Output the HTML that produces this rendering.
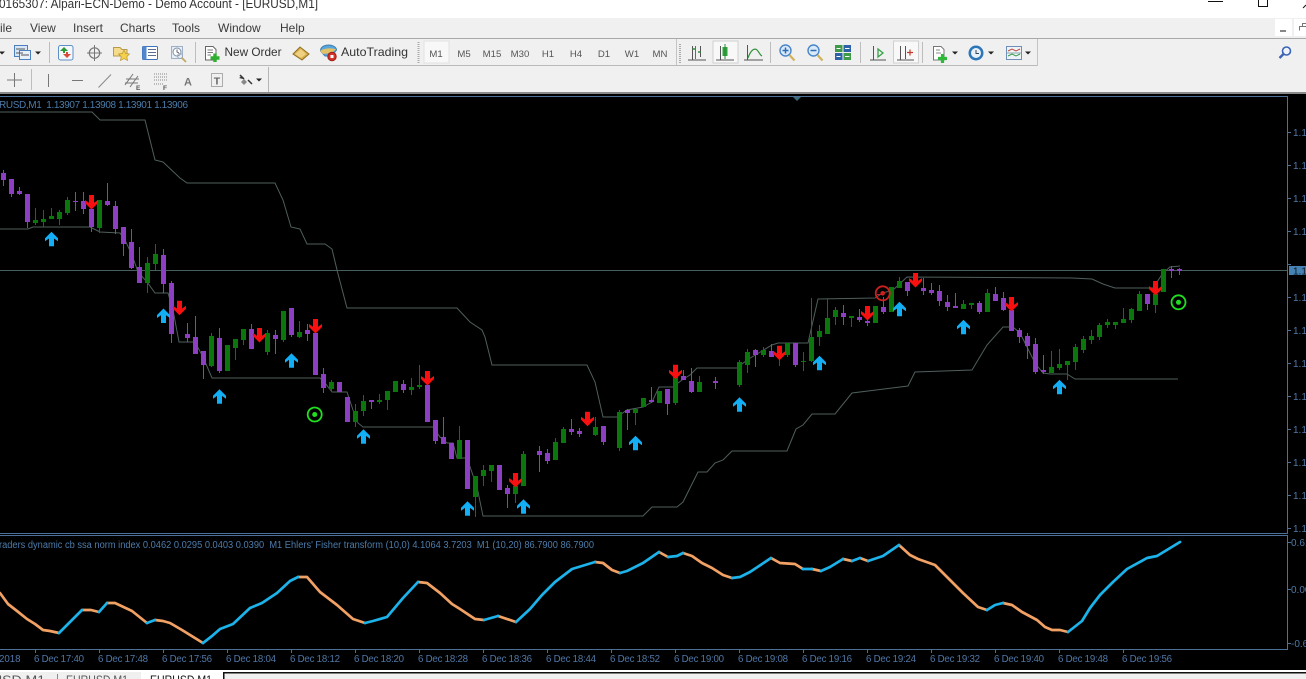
<!DOCTYPE html>
<html><head><meta charset="utf-8"><title>MetaTrader</title>
<style>
html,body{margin:0;padding:0;background:#000;width:1306px;height:679px;overflow:hidden}
svg{position:absolute;left:0;top:0;display:block}
text{font-family:"Liberation Sans",sans-serif}
</style></head><body>
<svg width="1306" height="679" viewBox="0 0 1306 679" xmlns="http://www.w3.org/2000/svg">
<defs>
<polygon id="up" points="0,-7.5 6.5,-1 6.5,2 2.5,-0.8 2.5,7 -2.5,7 -2.5,-0.8 -6.5,2 -6.5,-1" fill="#12aef6"/>
<polygon id="dn" points="0,7.5 6.5,1 6.5,-2 2.5,0.8 2.5,-7 -2.5,-7 -2.5,0.8 -6.5,-2 -6.5,1" fill="#f80f0f"/>
<g id="tri"><polygon points="-3,-1.5 3,-1.5 0,1.5" fill="#222"/></g>
</defs>

<!-- window chrome -->
<rect x="0" y="0" width="1306" height="18" fill="#fff"/>
<rect x="0" y="18" width="1306" height="76" fill="#f0f0f0"/>
<rect x="0" y="38" width="1306" height="1" fill="#a9a9a9"/>
<rect x="0" y="65" width="1038" height="1" fill="#b9b9b9"/>
<rect x="1037" y="39" width="1" height="27" fill="#c4c4c4"/>
<rect x="268" y="67" width="1" height="25" fill="#b5b5b5"/>
<rect x="0" y="92" width="1306" height="2" fill="#8a8a8a"/>
<text x="-1" y="8" font-size="12.5" fill="#333" textLength="319" lengthAdjust="spacingAndGlyphs">0165307: Alpari-ECN-Demo - Demo Account - [EURUSD,M1]</text>
<rect x="1208" y="1" width="15" height="1" fill="#111"/>
<path d="M1258.5 0V6.5H1267.5V0" fill="none" stroke="#111"/>
<path d="M1303 8L1306 5" stroke="#111"/>

<g font-size="12" fill="#3a3a3a">
<text x="0" y="32">ile</text><text x="30" y="32">View</text><text x="73" y="32">Insert</text><text x="120" y="32">Charts</text><text x="172" y="32">Tools</text><text x="218" y="32">Window</text><text x="280" y="32">Help</text>
</g>
<rect x="1275" y="19" width="17" height="17" fill="#fff"/><rect x="1280" y="30" width="6" height="2" fill="#888"/>
<rect x="1294" y="19" width="12" height="17" fill="#fff"/><path d="M1299.5 30.5V26.5H1306M1302.5 26V23.5H1306" fill="none" stroke="#777"/>
<circle cx="1286.5" cy="51" r="4" fill="#eef3fb" stroke="#3b62b5" stroke-width="1.6"/><path d="M1283.5 54L1279.5 58" stroke="#3b62b5" stroke-width="2.4"/>

<!-- toolbar row 1 -->
<use href="#tri" x="2" y="53"/>
<rect x="14.5" y="45.5" width="13" height="11" fill="#d8e6f7" stroke="#4c7fbd"/><rect x="19.5" y="50.5" width="11" height="9" fill="#e8f0fa" stroke="#4c7fbd"/><path d="M16 49H25M16 53H23M21 55H29" stroke="#555"/>
<use href="#tri" x="38" y="53"/>
<rect x="49" y="42" width="1" height="21" fill="#bdbdbd"/>
<rect x="58.5" y="45.5" width="14.5" height="14.5" rx="2" fill="#f4f8fc" stroke="#5c8fc8"/><polygon points="64,47 68,51 65,51 65,53 63,53 63,51 60,51" fill="#2a9a38"/><polygon points="67,58 63,54 66,54 66,52 68,52 68,54 71,54" fill="#d94a3a"/>
<circle cx="94.5" cy="53" r="5.2" fill="none" stroke="#777" stroke-width="1.2"/><path d="M94.5 45V61M87 53H102" stroke="#777"/>
<path d="M113.5 47.5H120L122 49.5H127V56H113.5Z" fill="#f6dc8a" stroke="#b79a4a"/><polygon points="124,50 125.7,53.5 129.5,54 126.8,56.6 127.5,60.5 124,58.6 120.5,60.5 121.2,56.6 118.5,54 122.3,53.5" fill="#f5d04a" stroke="#b8952e" stroke-width=".7"/>
<rect x="142.5" y="46.5" width="15" height="13" rx="1" fill="#fff" stroke="#3f72b8"/><rect x="142.5" y="46.5" width="4" height="13" fill="#4f86cc"/><path d="M148 49.5H156M148 52.5H156M148 55.5H156" stroke="#5b6f8c"/>
<rect x="171.5" y="46.5" width="11" height="12" fill="#e7eef6" stroke="#9db0c6"/><circle cx="177" cy="52" r="4" fill="#fff" stroke="#7d8fa6"/><path d="M177 49.5V52L179 53" stroke="#667" fill="none"/><circle cx="180" cy="56" r="2.5" fill="none" stroke="#9aa9bb"/><path d="M182 58L186 62" stroke="#c0a862" stroke-width="1.8"/>
<rect x="195" y="42" width="1" height="21" fill="#bdbdbd"/>
<path d="M205.5 46.5H213L216 49.5V60H205.5Z" fill="#fff" stroke="#666"/><path d="M207.5 50H213M207.5 52.5H213M207.5 55H211" stroke="#777"/><path d="M215 53.5V62M210.5 58H219.5" stroke="#2fae2f" stroke-width="3.4"/>
<text x="224.5" y="56" font-size="12" fill="#333" textLength="57" lengthAdjust="spacingAndGlyphs">New Order</text>
<polygon points="293,54 300,47 309,54 302,60" fill="#d9ad4a" stroke="#8f7024"/><polygon points="295,54 301,49 306,54 301,58" fill="#f0d184"/>
<path d="M320.5 51C320.5 46 326 45 329 45C332.5 45 336.5 47 336.5 50L332 56H325Z" fill="#5aa6da" stroke="#3e7fb0"/><path d="M320 51C323 48.5 332 47.5 336 49.5L331 53L323 54Z" fill="#e3c266"/><circle cx="332" cy="56.5" r="4.2" fill="#d4332a" stroke="#9d1f18"/><rect x="330.5" y="55" width="3" height="3" fill="#fff"/>
<text x="341" y="56" font-size="12" fill="#333" textLength="67" lengthAdjust="spacingAndGlyphs">AutoTrading</text>
<path d="M418.5 42V63" stroke="#aaa" stroke-dasharray="1 1" stroke-width="2"/>
<rect x="424" y="41" width="25" height="22" fill="#f8f8f8" stroke="#e2e2e2"/>
<g font-size="9.6" fill="#555" text-anchor="middle">
<text x="436" y="57">M1</text><text x="464" y="57">M5</text><text x="492" y="57">M15</text><text x="520" y="57">M30</text><text x="548" y="57">H1</text><text x="576" y="57">H4</text><text x="604" y="57">D1</text><text x="632" y="57">W1</text><text x="660" y="57">MN</text>
</g>
<rect x="676" y="39" width="1" height="26" fill="#c4c4c4"/>
<path d="M680 44V63" stroke="#aaa" stroke-dasharray="1 1" stroke-width="2"/>
<!-- chart type icons -->
<path d="M692.5 46V60M688 60H706M700.5 46V57" stroke="#555" fill="none"/><path d="M692.5 49H695M700.5 52H698" stroke="#2f8f3a" stroke-width="1.5"/><path d="M695.5 46V59" stroke="#2f8f3a"/>
<rect x="713" y="41" width="25" height="22" fill="#f8f8f8" stroke="#cfcfcf"/><path d="M720.5 46V60M716 60H734" stroke="#555"/><rect x="722.5" y="47" width="5" height="9" fill="#2ea43a"/><path d="M725 44V59" stroke="#2a8a35"/>
<path d="M747.5 45V60M744 60H763" stroke="#555"/><path d="M748 58C751 49 755 48 757 50C759 52 760 55 762 56" fill="none" stroke="#2f8f3a" stroke-width="1.2"/>
<rect x="770" y="42" width="1" height="21" fill="#bdbdbd"/>
<circle cx="785.5" cy="50.5" r="5.5" fill="#dbeafb" stroke="#4a86c8" stroke-width="1.4"/><path d="M782.5 50.5H788.5M785.5 47.5V53.5" stroke="#2e6cb0" stroke-width="1.5"/><path d="M789.5 55L794.5 60.5" stroke="#d1b25a" stroke-width="2.2"/>
<circle cx="813.5" cy="50.5" r="5.5" fill="#dbeafb" stroke="#4a86c8" stroke-width="1.4"/><path d="M810.5 50.5H816.5" stroke="#2e6cb0" stroke-width="1.5"/><path d="M817.5 55L822.5 60.5" stroke="#d1b25a" stroke-width="2.2"/>
<rect x="835" y="45" width="7.5" height="7" fill="#3f9a4a"/><rect x="843.5" y="45" width="7.5" height="7" fill="#2d62a8"/><rect x="835" y="53" width="7.5" height="7" fill="#2d62a8"/><rect x="843.5" y="53" width="7.5" height="7" fill="#3f9a4a"/><path d="M836.5 48.5H840.5M845 48.5H849.5M836.5 56.5H840.5M845 56.5H849.5" stroke="#fff"/>
<rect x="860" y="42" width="1" height="21" fill="#bdbdbd"/>
<path d="M873.5 46V60M870 60H886" stroke="#555"/><polygon points="878,49 883,53 878,57" fill="none" stroke="#39a047" stroke-width="1.3"/>
<rect x="893.5" y="41" width="25" height="22" fill="#f8f8f8" stroke="#cfcfcf"/><path d="M900.5 46V60M897 60H914M905.5 46V59" stroke="#555"/><path d="M907 52.5H913M910 49.5V55.5" stroke="#c03a2a" stroke-width="1.2"/>
<rect x="922" y="42" width="1" height="21" fill="#bdbdbd"/>
<path d="M933.5 46.5H941L944 49.5V60H933.5Z" fill="#fff" stroke="#777"/><path d="M936 50H940M936 53H941" stroke="#888"/><path d="M942.5 54V63M938 58.5H947" stroke="#2fb83a" stroke-width="3.2"/>
<use href="#tri" x="955" y="53"/>
<circle cx="976" cy="53" r="7.5" fill="#2c75b8"/><circle cx="976" cy="53" r="5" fill="#e8f0f8"/><path d="M976 50V53.5H979" stroke="#345" fill="none"/>
<use href="#tri" x="991" y="53"/>
<rect x="1006.5" y="46.5" width="15" height="13" fill="#eef3f9" stroke="#6d8fb8"/><path d="M1008 51L1012 49L1016 51L1020 49" stroke="#c24a3a" fill="none"/><path d="M1008 56L1012 54L1016 56L1020 54" stroke="#3a9a4a" fill="none"/><path d="M1006.5 53H1021" stroke="#8aa"/>
<use href="#tri" x="1028" y="53"/>

<!-- toolbar row 2 -->
<path d="M7 80H22M14.5 73V87" stroke="#777"/>
<rect x="31" y="69" width="1" height="21" fill="#bdbdbd"/>
<path d="M48.5 74V87" stroke="#777"/>
<path d="M72 80.5H83" stroke="#777"/>
<path d="M98.5 87.5L111 74.5" stroke="#888"/>
<path d="M125 85L133 74M130 87L138 76M126 79H139M125 83H138" stroke="#777" fill="none"/>
<text x="136" y="90" font-size="6.5" font-weight="bold" fill="#555">E</text>
<path d="M154 74H168M154 77H168M154 80H168M154 84H164" stroke="#888" stroke-dasharray="1 1"/>
<text x="163" y="90" font-size="6.5" font-weight="bold" fill="#555">F</text>
<text x="188" y="85.5" font-size="11" font-weight="bold" fill="#777" text-anchor="middle">A</text>
<rect x="211.5" y="73.5" width="11" height="13" fill="none" stroke="#666" stroke-dasharray="1 1"/>
<text x="217" y="84.5" font-size="10.5" font-weight="bold" fill="#666" text-anchor="middle">T</text>
<path d="M240 75L244 79M248 80L252 84" stroke="#333" stroke-width="1.5"/><polygon points="241,82 244,79 247,82 244,85" fill="#888"/><polygon points="239,78 242,76 243,79" fill="#333"/>
<use href="#tri" x="259" y="80"/>

<!-- chart area -->
<rect x="0" y="94" width="1306" height="576" fill="#000"/>
<g fill="none" stroke="#4d7098" stroke-width="1">
<path d="M0 96.5H1287.5V533.5H0"/>
<path d="M0 535.5H1287.5V649.5H0"/>
</g>
<polygon points="793,97 801,97 797,101" fill="#3c6a7a"/>
<text x="-1" y="108" font-size="10" fill="#4c7cab" textLength="189" lengthAdjust="spacing" xml:space="preserve">RUSD,M1  1.13907 1.13908 1.13901 1.13906</text>
<text x="-1" y="548" font-size="10" fill="#4c7cab" textLength="595" lengthAdjust="spacingAndGlyphs" xml:space="preserve">raders dynamic cb ssa norm index 0.0462 0.0295 0.0403 0.0390  M1 Ehlers' Fisher transform (10,0) 4.1064 3.7203  M1 (10,20) 86.7900 86.7900</text>

<!-- right axis -->
<g font-size="10" fill="#4f78a8">
<text x="1293" y="136">1.1</text><text x="1293" y="169">1.1</text><text x="1293" y="202">1.1</text><text x="1293" y="235">1.1</text><text x="1293" y="301">1.1</text><text x="1293" y="334">1.1</text><text x="1293" y="367">1.1</text><text x="1293" y="400">1.1</text><text x="1293" y="433">1.1</text><text x="1293" y="466">1.1</text><text x="1293" y="499">1.1</text><text x="1293" y="532">1.1</text>
<text x="1291" y="546">0.61</text><text x="1291" y="593">0.00</text><text x="1291" y="647">-0.6</text>
</g>
<path d="M1288 132.5H1291M1288 165.5H1291M1288 198.5H1291M1288 231.5H1291M1288 264.5H1291M1288 297.5H1291M1288 330.5H1291M1288 363.5H1291M1288 396.5H1291M1288 429.5H1291M1288 462.5H1291M1288 495.5H1291M1288 528.5H1291M1288 542.5H1291M1288 589.5H1291M1288 643.5H1291" stroke="#4d7098"/>
<rect x="1289" y="266" width="17" height="9" fill="#4682b4"/>
<text x="1293" y="274.5" font-size="10" fill="#0b1a28">1.1</text>

<!-- time axis -->
<path d="M35.5 650V653M99.5 650V653M163.5 650V653M227.5 650V653M291.5 650V653M355.5 650V653M419.5 650V653M483.5 650V653M547.5 650V653M611.5 650V653M675.5 650V653M739.5 650V653M803.5 650V653M867.5 650V653M931.5 650V653M995.5 650V653M1059.5 650V653M1123.5 650V653" stroke="#4d7098"/>
<g font-size="9.7" fill="#4f78a8">
<text x="-1" y="662">2018</text>
<text x="34" y="662" textLength="50">6 Dec 17:40</text><text x="98" y="662" textLength="50">6 Dec 17:48</text><text x="162" y="662" textLength="50">6 Dec 17:56</text><text x="226" y="662" textLength="50">6 Dec 18:04</text><text x="290" y="662" textLength="50">6 Dec 18:12</text><text x="354" y="662" textLength="50">6 Dec 18:20</text><text x="418" y="662" textLength="50">6 Dec 18:28</text><text x="482" y="662" textLength="50">6 Dec 18:36</text><text x="546" y="662" textLength="50">6 Dec 18:44</text><text x="610" y="662" textLength="50">6 Dec 18:52</text><text x="674" y="662" textLength="50">6 Dec 19:00</text><text x="738" y="662" textLength="50">6 Dec 19:08</text><text x="802" y="662" textLength="50">6 Dec 19:16</text><text x="866" y="662" textLength="50">6 Dec 19:24</text><text x="930" y="662" textLength="50">6 Dec 19:32</text><text x="994" y="662" textLength="50">6 Dec 19:40</text><text x="1058" y="662" textLength="50">6 Dec 19:48</text><text x="1122" y="662" textLength="50">6 Dec 19:56</text>
</g>

<!-- price line -->
<rect x="0" y="270" width="1287" height="1" fill="#47605f"/>

<!-- envelope lines -->
<g fill="none" stroke="#4f5f5d" stroke-width="1">
<polyline points="0,112 92,112 100,120 145,120 150,140 155,160 163,162 180,178 187,183 275,183 283,200 291,227 300,229 307,244 325,244 332,249 337,270 347,308 457,308 470,322 482,330 485,337 492,365 587,365 595,382 603,417 617,417 627,410 643,407 652,402 659,387 673,387 682,380 690,375 697,368 737,368 747,360 772,345 778,343 808,343 818,299 875,298 883,293 893,290 907,277 1072,278 1092,279 1103,284 1115,288 1153,288 1163,273 1170,267 1180,266"/>
<polyline points="0,229 28,229 33,227 90,227 100,232 120,233 125,240 132,255 138,272 147,282 155,293 168,293 173,310 179,342 195,342 203,357 212,378 320,378 325,383 332,392 347,392 353,410 358,423 363,427 433,427 440,437 447,443 453,443 457,458 467,458 477,487 483,516 643,516 652,507 677,507 683,502 698,472 707,472 715,463 723,460 732,451 787,451 796,429 803,425 812,414 835,414 852,393 908,386 915,372 972,370 987,345 1003,327 1013,327 1020,333 1035,363 1043,373 1050,374 1067,374 1075,379 1178,379"/>
</g>

<!-- candles: wicks -->
<path fill="none" stroke="#8c3fc2" stroke-width="1" d="M3.5 170V186M11.5 179V197M19.5 187V195M27.5 194V228M75.5 192V211M83.5 192V214M91.5 207V232M107.5 183V206M115.5 201V234M123.5 227V256M131.5 229V269M139.5 247V283M163.5 249V293M171.5 281V343M187.5 323V342M195.5 316V354M203.5 351V379M219.5 328V373M251.5 324V349M275.5 330V354M291.5 308V337M307.5 324V341M323.5 368V393M371.5 400V409M403.5 380V393M435.5 420V444M443.5 417V444M507.5 485V508M539.5 446V472M547.5 449V464M571.5 419V435M579.5 428V437M603.5 426V445M627.5 409V430M651.5 387V403M667.5 389V415M683.5 370V380M691.5 368V393M715.5 377V389M755.5 349V367M771.5 344V357M795.5 343V367M843.5 305V325M859.5 309V322M867.5 317V326M883.5 297V314M907.5 282V296M923.5 278V295M931.5 283V295M939.5 285V306M947.5 295V311M955.5 293V308M979.5 301V314M995.5 287V301M1003.5 292V311M1019.5 328V343M1027.5 333V359M1035.5 338V374M1043.5 355V374M1147.5 294V310M1171.5 266V278M1179.5 268V275"/>
<path fill="none" stroke="#0b760b" stroke-width="1" d="M35.5 208V225M43.5 210V227M51.5 208V219M59.5 210V225M67.5 197V215M99.5 200V233M147.5 257V293M155.5 244V270M211.5 333V367M235.5 339V360M243.5 329V345M267.5 330V355M283.5 311V342M299.5 321V338M331.5 380V392M355.5 404V427M363.5 395V416M379.5 394V404M387.5 391V410M411.5 378V395M419.5 365V389M459.5 426V459M475.5 476V517M483.5 465V486M491.5 465V482M515.5 480V503M523.5 451V486M555.5 438V460M563.5 427V443M595.5 417V436M619.5 410V451M635.5 409V425M675.5 377V405M699.5 376V392M739.5 360V387M747.5 349V373M763.5 347V357M779.5 350V366M787.5 343V357M803.5 352V371M811.5 298V362M819.5 325V346M827.5 299V334M835.5 307V325M851.5 316V327M899.5 277V288M963.5 300V309M971.5 303V309M987.5 289V312M1051.5 351V373M1059.5 349V370M1067.5 361V380M1075.5 344V370M1083.5 336V353M1091.5 330V344M1099.5 323V340M1107.5 319V328M1115.5 322V329M1123.5 308V323M1131.5 308V323M1139.5 291V311M1155.5 294V313"/>
<!-- candles: bodies -->
<path fill="none" stroke="#8c3fc2" stroke-width="5" d="M3.5 173V180M11.5 179V194M19.5 191V194M27.5 194V222M75.5 201V202M83.5 201V209M91.5 209V227M107.5 201V205M115.5 206V229M123.5 227V244M131.5 242V268M139.5 267V283M163.5 255V284M171.5 283V334M187.5 334V338M195.5 337V354M203.5 351V365M219.5 338V371M251.5 329V349M275.5 335V339M291.5 308V335M307.5 330V334M315.5 333V375M323.5 374V388M339.5 382V392M347.5 397V422M371.5 400V402M403.5 384V390M427.5 385V422M435.5 420V441M443.5 437V444M451.5 443V459M467.5 440V489M499.5 465V490M507.5 488V494M539.5 451V455M547.5 453V461M571.5 429V432M579.5 431V434M603.5 426V442M627.5 410V413M651.5 400V402M667.5 389V404M683.5 376V380M691.5 381V392M715.5 381V383M755.5 350V355M771.5 351V357M795.5 343V365M843.5 313V317M859.5 317V320M867.5 321V323M883.5 307V312M907.5 282V291M923.5 288V291M931.5 290V293M939.5 291V301M947.5 302V307M955.5 306V308M979.5 303V312M995.5 294V301M1003.5 298V310M1011.5 310V331M1019.5 330V337M1027.5 336V346M1035.5 344V372M1043.5 370V372M1147.5 294V304M1171.5 269V271M1179.5 269V271"/>
<path fill="none" stroke="#0b760b" stroke-width="5" d="M35.5 220V223M43.5 219V222M51.5 216V219M59.5 212V219M67.5 200V213M99.5 200V228M147.5 263V283M155.5 254V264M211.5 336V366M227.5 345V371M235.5 339V348M243.5 329V340M267.5 333V352M283.5 311V340M299.5 332V337M331.5 382V389M355.5 411V422M363.5 401V411M379.5 400V402M387.5 391V400M395.5 381V392M411.5 387V390M419.5 385V387M459.5 440V459M475.5 476V497M483.5 470V476M491.5 465V471M515.5 486V494M523.5 454V486M555.5 442V460M563.5 429V443M595.5 427V435M619.5 412V448M635.5 409V413M643.5 398V407M659.5 391V403M675.5 377V403M699.5 382V392M739.5 362V385M747.5 352V365M763.5 350V355M779.5 355V358M787.5 343V355M803.5 361V362M811.5 337V361M819.5 331V337M827.5 318V334M835.5 310V317M851.5 316V318M875.5 306V323M891.5 287V312M899.5 281V288M963.5 304V309M971.5 303V305M987.5 293V312M1051.5 367V373M1059.5 364V368M1067.5 361V365M1075.5 347V362M1083.5 339V350M1091.5 336V340M1099.5 325V337M1107.5 322V325M1115.5 322V325M1123.5 319V323M1131.5 309V320M1139.5 294V311M1155.5 294V305M1163.5 269V292"/>

<!-- arrows -->
<use href="#up" x="51.5" y="239.3"/><use href="#up" x="163.5" y="316"/><use href="#up" x="219.5" y="396.7"/><use href="#up" x="291.5" y="360.7"/><use href="#up" x="363.5" y="436.7"/><use href="#up" x="467.5" y="508.7"/><use href="#up" x="523.5" y="506.7"/><use href="#up" x="635.5" y="443.3"/><use href="#up" x="739.5" y="404.7"/><use href="#up" x="819.5" y="363.3"/><use href="#up" x="899.5" y="309.3"/><use href="#up" x="963.5" y="327.3"/><use href="#up" x="1059.5" y="387.3"/>
<use href="#dn" x="91.5" y="202"/><use href="#dn" x="179.5" y="307.7"/><use href="#dn" x="259.5" y="335"/><use href="#dn" x="315.5" y="326"/><use href="#dn" x="427.5" y="378"/><use href="#dn" x="515.5" y="480"/><use href="#dn" x="587.5" y="418.7"/><use href="#dn" x="675.5" y="371.7"/><use href="#dn" x="779.5" y="352.7"/><use href="#dn" x="867.5" y="313"/><use href="#dn" x="915.5" y="280"/><use href="#dn" x="1011.5" y="304"/><use href="#dn" x="1155.5" y="288"/>

<!-- signal circles -->
<circle cx="314.7" cy="414.5" r="7" fill="none" stroke="#1fe01f" stroke-width="1.8"/><circle cx="314.7" cy="414.5" r="2.5" fill="#1fe01f"/>
<circle cx="1178.5" cy="302.3" r="7" fill="none" stroke="#1fe01f" stroke-width="1.8"/><circle cx="1178.5" cy="302.3" r="2.5" fill="#1fe01f"/>
<circle cx="882.7" cy="293.3" r="7" fill="none" stroke="#cc1f1f" stroke-width="1.8"/><circle cx="882.7" cy="293.3" r="2.3" fill="#cc1f1f"/><path d="M877 294.5H882" stroke="#cc1f1f"/>

<!-- indicator -->
<g fill="none" stroke-width="2.7" stroke-linejoin="round" stroke-linecap="round">
<g stroke="#f2a165">
<polyline points="0,593 8,604 17,611 27,619 35,624 43,630 50,631 59,633"/>
<polyline points="82,610 91,610 99,612"/>
<polyline points="107,603 115,603 132,611 147,623"/>
<polyline points="155,620 163,621 170,623 182,630 203,643"/>
<polyline points="298,577 307,577 320,592 337,605 353,619 365,623"/>
<polyline points="418,582 427,583 440,593 452,604 460,609 475,619 484,620"/>
<polyline points="498,616 516,622"/>
<polyline points="595,562 603,563 612,570 620,573"/>
<polyline points="659,552 668,557"/>
<polyline points="683,553 692,556 702,563 712,568 723,575 732,578"/>
<polyline points="771,558 780,563 795,564 803,569"/>
<polyline points="812,569 821,571"/>
<polyline points="843,559 852,561"/>
<polyline points="860,558 868,561"/>
<polyline points="899,545 910,555 918,559 935,565 950,580 963,593 978,607 987,610"/>
<polyline points="1003,603 1012,605 1022,612 1037,620 1045,627 1052,630 1060,630 1068,632"/>
</g>
<g stroke="#1cb2ea">
<polyline points="59,633 72,620 82,610"/>
<polyline points="99,612 107,603"/>
<polyline points="147,623 155,620"/>
<polyline points="203,643 212,636 220,629 233,624 250,608 262,603 277,593 290,581 298,577"/>
<polyline points="365,623 373,621 387,617 403,598 418,582"/>
<polyline points="484,620 498,616"/>
<polyline points="516,622 530,609 542,595 555,582 572,569 595,562"/>
<polyline points="620,573 627,571 643,563 659,552"/>
<polyline points="668,557 677,556 683,553"/>
<polyline points="732,578 740,577 750,572 771,558"/>
<polyline points="803,569 812,569"/>
<polyline points="821,571 830,567 843,559"/>
<polyline points="852,561 860,558"/>
<polyline points="868,561 883,556 899,545"/>
<polyline points="987,610 995,605 1003,603"/>
<polyline points="1068,632 1082,621 1090,608 1100,595 1113,582 1127,569 1147,558 1157,556 1180,542"/>
</g>
</g>

<!-- bottom tabs -->
<rect x="0" y="670" width="1306" height="2" fill="#fff"/>
<rect x="0" y="672" width="1306" height="7" fill="#f0f0f0"/>
<rect x="224" y="672" width="1082" height="1.5" fill="#111"/>
<rect x="223" y="672" width="1.5" height="7" fill="#111"/>
<rect x="141" y="671" width="82" height="8" fill="#fff"/>
<rect x="57" y="674" width="1" height="5" fill="#888"/>
<g font-size="12">
<text x="-8" y="684" fill="#555" textLength="53" lengthAdjust="spacingAndGlyphs">USD,M1</text>
<text x="66" y="684" fill="#555" textLength="62" lengthAdjust="spacingAndGlyphs">EURUSD,M1</text>
<text x="150" y="684" fill="#111" textLength="62" lengthAdjust="spacingAndGlyphs">EURUSD,M1</text>
</g>
</svg>
</body></html>
